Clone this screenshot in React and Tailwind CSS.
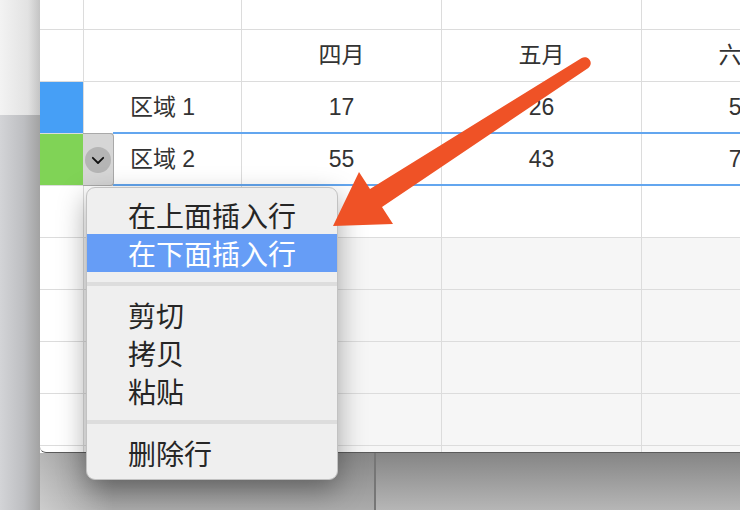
import React from 'react';

const TEXT_FONT = "font-['Liberation_Sans','Noto_Sans_CJK_SC',sans-serif]";

const ROWS = [
    { swatch: null, cells: ['', '四月', '五月', '六月'] },
    { swatch: 'bg-[#469ff6]', cells: ['区域 1', '17', '26', '58'] },
    { swatch: 'bg-[#80d356]', cells: ['区域 2', '55', '43', '72'], selected: true },
    { swatch: null, cells: ['', '', '', ''] },
    { swatch: null, cells: ['', '', '', ''], muted: true },
    { swatch: null, cells: ['', '', '', ''], muted: true },
    { swatch: null, cells: ['', '', '', ''], muted: true },
    { swatch: null, cells: ['', '', '', ''], muted: true },
];

const COL_WIDTHS = ['w-[158px]', 'w-[200px]', 'w-[200px]', 'w-[200px]'];

function Chevron() {
    return (
        <svg width="14" height="9" viewBox="0 0 14 9" fill="none">
            <path d="M1.8 1.8 L7 7 L12.2 1.8" stroke="#111" strokeWidth="1.8" strokeLinecap="round" strokeLinejoin="round" />
        </svg>
    );
}

function Row({ row }) {
    return (
        <div className="relative flex h-[52px] shrink-0 border-b border-[#dcdcdc]">
            <div className={`w-[44px] shrink-0 border-r border-[#dcdcdc] ${row.swatch || 'bg-white'}`} />
            {row.cells.map((c, i) => (
                <div
                    key={i}
                    className={`${COL_WIDTHS[i]} shrink-0 border-r border-[#dcdcdc] flex items-center justify-center text-[23px] text-[#333333] ${row.muted ? 'bg-[#f6f6f6]' : 'bg-white'}`}
                >
                    {c}
                </div>
            ))}
            {row.selected && (
                <>
                    <div className="absolute left-[73px] right-0 -top-[2px] bottom-[-1px] border-y-2 border-[#63a6ef] pointer-events-none" />
                    <div className="absolute left-[43px] w-[31px] -top-px bottom-[-1px] bg-[#d6d6d6] border border-l-0 border-[#a9a9a9] rounded-r-[4px] flex items-center justify-center">
                        <div className="h-[26px] w-[26px] rounded-full bg-[#b5b5b5] flex items-center justify-center pt-[2px]">
                            <Chevron />
                        </div>
                    </div>
                </>
            )}
        </div>
    );
}

function MenuItem({ label, active }) {
    return (
        <div className={`h-[38px] pl-[41px] flex items-center text-[28px] leading-none ${active ? 'bg-[#669df6] text-white' : 'text-[#262626]'}`}>
            {label}
        </div>
    );
}

function Separator() {
    return <div className="my-[10px] h-[4px] bg-[#dddddd]" />;
}

export default function App() {
    return (
        <div className={`relative w-[740px] h-[510px] overflow-hidden flex ${TEXT_FONT}`}>
            {/* desktop strip on the left */}
            <div className="w-[40px] shrink-0 flex flex-col">
                <div className="h-[115px] bg-[linear-gradient(90deg,#f3f3f3,#e2e2e2_70%,#c4c4c4)] shadow-[0_2px_4px_rgba(0,0,0,0.15)]" />
                <div className="flex-1 bg-[linear-gradient(90deg,#d3d4d7,#bdbec1_60%,#a2a2a2)]" />
            </div>

            <div className="flex-1 flex flex-col min-w-0">
                {/* spreadsheet window */}
                <div className="h-[453px] shrink-0 bg-white rounded-bl-[6px] border-b border-[#5a5a5a] overflow-hidden flex flex-col">
                    <div className="flex h-[30px] shrink-0 border-b border-[#dcdcdc]">
                        <div className="w-[44px] shrink-0 border-r border-[#dcdcdc]" />
                        {COL_WIDTHS.map((w, i) => (
                            <div key={i} className={`${w} shrink-0 border-r border-[#dcdcdc]`} />
                        ))}
                    </div>
                    {ROWS.map((r, i) => (
                        <Row key={i} row={r} />
                    ))}
                    <div className="flex flex-1">
                        <div className="w-[44px] shrink-0 border-r border-[#dcdcdc]" />
                        {COL_WIDTHS.map((w, i) => (
                            <div key={i} className={`${w} shrink-0 border-r border-[#dcdcdc] bg-[#f6f6f6]`} />
                        ))}
                    </div>
                </div>

                {/* desktop below the window */}
                <div className="flex-1 flex">
                    <div className="w-[334px] shrink-0 bg-[linear-gradient(90deg,rgba(255,255,255,0.4),transparent_22%),linear-gradient(180deg,#868686,#ababab)]" />
                    <div className="w-[2px] shrink-0 bg-[#767676]" />
                    <div className="flex-1 bg-[linear-gradient(180deg,#858585,#b6b6b6)]" />
                </div>
            </div>

            {/* context menu */}
            <div className="absolute left-[86px] top-[187px] w-[252px] rounded-[9px] border border-[#c2c2c2] bg-[#efefef] pt-[8px] pb-[7px] shadow-[0_10px_28px_rgba(0,0,0,0.35)] font-['Noto_Sans_CJK_SC',sans-serif] overflow-hidden">
                <MenuItem label="在上面插入行" />
                <MenuItem label="在下面插入行" active />
                <Separator />
                <MenuItem label="剪切" />
                <MenuItem label="拷贝" />
                <MenuItem label="粘贴" />
                <Separator />
                <MenuItem label="删除行" />
            </div>

            {/* annotation arrow */}
            <svg className="absolute left-0 top-0 pointer-events-none" width="740" height="510" viewBox="0 0 740 510">
                <path
                    d="M581.7 58 L370 189 L359 172 L333 226 L393 224 L382 207 L588.3 68 A6 6 0 0 0 581.7 58 Z"
                    fill="#ef5226"
                />
            </svg>
        </div>
    );
}
